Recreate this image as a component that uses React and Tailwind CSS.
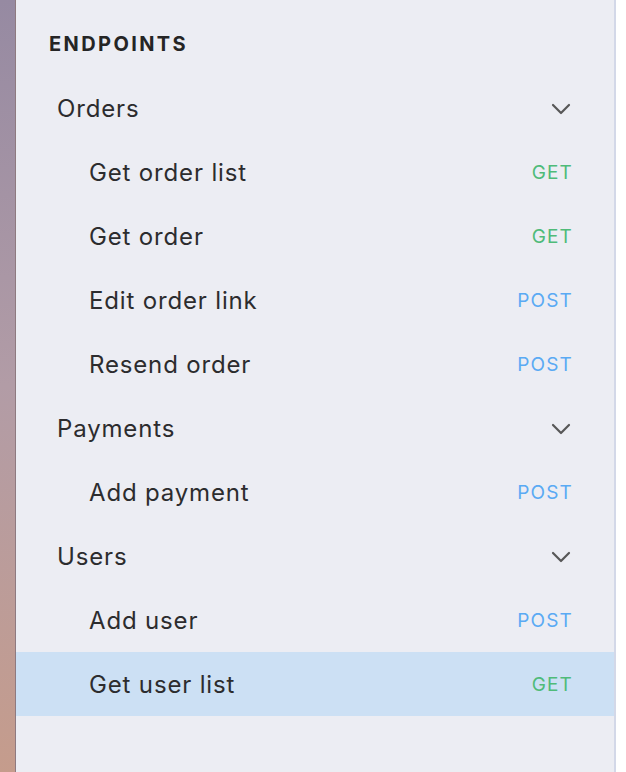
import React from "react";

const groups = [
  {
    name: "Orders",
    items: [
      { name: "Get order list", method: "GET" },
      { name: "Get order", method: "GET" },
      { name: "Edit order link", method: "POST" },
      { name: "Resend order", method: "POST" },
    ],
  },
  {
    name: "Payments",
    items: [{ name: "Add payment", method: "POST" }],
  },
  {
    name: "Users",
    items: [
      { name: "Add user", method: "POST" },
      { name: "Get user list", method: "GET", active: true },
    ],
  },
];

function Chevron() {
  return (
    <svg width="20" height="12" viewBox="0 0 20 12" fill="none" className="mr-[1px]">
      <path d="M2 2 L10 10 L18 2" stroke="#575757" strokeWidth="2.2" strokeLinecap="round" strokeLinejoin="round" />
    </svg>
  );
}

function Method({ m }) {
  return (
    <span
      className={
        "text-[19px] font-normal tracking-[0.06em] " +
        (m === "GET" ? "text-[#4fbb79]" : "text-[#5aaaf3]")
      }
    >
      {m}
    </span>
  );
}

export default function App() {
  return (
    <div
      className="flex h-[772px] w-[626px] bg-white"
      style={{ fontFamily: "Inter, 'Liberation Sans', sans-serif" }}
    >
      <div className="w-[16px] shrink-0 border-r border-[#8e7a80] bg-gradient-to-b from-[#968aa2] via-[#b29ca6] to-[#c59c8c]" />
      <div className="w-[600px] shrink-0 border-r-2 border-[#d3d8e8] bg-[#ecedf3]">
        <div className="pl-[33px] pt-[32px] pb-[20px] text-[20px] leading-[24px] font-bold tracking-[0.12em] text-[#252525]">
          ENDPOINTS
        </div>
        {groups.map((g) => (
          <div key={g.name}>
            <div className="flex h-[64px] items-center justify-between pt-[2px] pl-[41px] pr-[42px] text-[24px] tracking-[0.035em] text-[#2c2c2e]">
              <span>{g.name}</span>
              <Chevron />
            </div>
            {g.items.map((it) => (
              <div
                key={it.name}
                className={
                  "flex h-[64px] items-center justify-between pt-[2px] pl-[73px] pr-[41px] text-[24px] tracking-[0.035em] text-[#2c2c2e] " +
                  (it.active ? "bg-[#cce0f4]" : "")
                }
              >
                <span>{it.name}</span>
                <Method m={it.method} />
              </div>
            ))}
          </div>
        ))}
      </div>
    </div>
  );
}
